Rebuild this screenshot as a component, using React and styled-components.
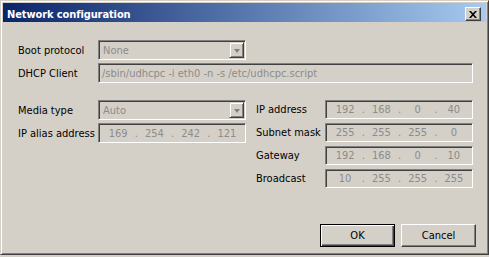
import React from 'react';
import styled, { createGlobalStyle } from 'styled-components';

const Global = createGlobalStyle`
  html, body { margin: 0; padding: 0; background: #d4d0c8; }
  body {
    font-family: "DejaVu Sans Condensed", "DejaVu Sans", sans-serif;
    font-stretch: semi-condensed;
    font-size: 11px;
    color: #000;
  }
`;

const Window = styled.div`
  width: 489px;
  height: 255px;
  box-sizing: border-box;
  background: #d4d0c8;
  border: 1px solid;
  border-color: #d4d0c8 #404040 #404040 #d4d0c8;
  box-shadow: inset 1px 1px #fff, inset -1px -1px #808080;
  padding: 2px;
  display: flex;
  flex-direction: column;
`;

const TitleBar = styled.div`
  height: 19px;
  flex: none;
  display: flex;
  align-items: flex-start;
  justify-content: space-between;
  background: linear-gradient(to right, #0a246a, #a6caf0);
  padding: 0 5px 0 4px;
`;

const TitleText = styled.div`
  color: #fff;
  font-weight: bold;
  font-size: 11px;
  line-height: 13px;
  padding-top: 5px;
  letter-spacing: -0.1px;
`;

const CloseButton = styled.div`
  margin-top: 4px;
  width: 16px;
  height: 14px;
  box-sizing: border-box;
  background: #d4d0c8;
  border: 1px solid;
  border-color: #fff #404040 #404040 #fff;
  box-shadow: inset -1px -1px #808080;
  display: flex;
  align-items: center;
  justify-content: center;
`;

const Content = styled.div`
  flex: 1;
  display: flex;
  flex-direction: column;
  padding: 18px 10px 5px 15px;
`;

const Row = styled.div`
  display: flex;
  align-items: center;
  height: ${p => p.$h || 20}px;
  margin-bottom: ${p => p.$gap ?? 3}px;
`;

const Label = styled.div`
  width: ${p => p.$w}px;
  flex: none;
  line-height: 13px;
`;

const Sunken = styled.div`
  box-sizing: border-box;
  width: ${p => p.$w}px;
  height: ${p => p.$h || 20}px;
  border: 1px solid;
  border-color: #808080 #fff #fff #808080;
  box-shadow: inset 1px 1px #404040, inset -1px -1px #d4d0c8;
  background: #d4d0c8;
  color: #8c8c8c;
  display: flex;
  align-items: center;
  padding: 0 2px 0 3px;
  white-space: nowrap;
  overflow: hidden;
`;

const ComboText = styled.div`
  flex: 1;
  padding-left: 1px;
`;

const ArrowButton = styled.div`
  box-sizing: border-box;
  width: 15px;
  height: 16px;
  margin-right: -1px;
  background: #d4d0c8;
  border: 1px solid;
  border-color: #d4d0c8 #404040 #404040 #d4d0c8;
  box-shadow: inset 1px 1px #fff, inset -1px -1px #808080;
  display: flex;
  align-items: center;
  justify-content: center;
  &::after {
    content: "";
    border-left: 3.5px solid transparent;
    border-right: 3.5px solid transparent;
    border-top: 4px solid #808080;
    margin-top: 1px;
  }
`;

const Columns = styled.div`
  display: flex;
  margin-top: 14px;
`;

const Column = styled.div`
  display: flex;
  flex-direction: column;
  width: ${p => p.$w}px;
`;

const Octet = styled.div`
  flex: 1;
  text-align: center;
`;

const Dot = styled.div`
  width: 4px;
  text-align: center;
`;

const Buttons = styled.div`
  margin-top: auto;
  display: flex;
  justify-content: flex-end;
  gap: 6px;
`;

const Button = styled.div`
  box-sizing: border-box;
  width: 75px;
  height: 23px;
  background: #d4d0c8;
  display: flex;
  align-items: center;
  justify-content: center;
  border: 1px solid;
  border-color: ${p => (p.$default ? '#000' : '#fff #404040 #404040 #fff')};
  box-shadow: ${p =>
    p.$default
      ? 'inset 1px 1px #fff, inset -1px -1px #404040, inset -2px -2px #808080'
      : 'inset -1px -1px #808080'};
`;

const Combo = ({ value, width }) => (
  <Sunken $w={width}>
    <ComboText>{value}</ComboText>
    <ArrowButton />
  </Sunken>
);

const IpField = ({ parts, width, height }) => (
  <Sunken $w={width} $h={height}>
    {parts.map((p, i) => (
      <React.Fragment key={i}>
        {i > 0 && <Dot>.</Dot>}
        <Octet>{p}</Octet>
      </React.Fragment>
    ))}
  </Sunken>
);

export default function App() {
  return (
    <>
      <Global />
      <Window>
        <TitleBar>
          <TitleText>Network configuration</TitleText>
          <CloseButton>
            <svg width="8" height="7" viewBox="0 0 8 7">
              <path d="M0 0h2l2 2.3L6 0h2L5 3.5 8 7H6L4 4.7 2 7H0l3-3.5z" fill="#000" />
            </svg>
          </CloseButton>
        </TitleBar>
        <Content>
          <Row>
            <Label $w={80}>Boot protocol</Label>
            <Combo value="None" width={148} />
          </Row>
          <Row>
            <Label $w={80}>DHCP Client</Label>
            <Sunken $w={375}>/sbin/udhcpc -i eth0 -n -s /etc/udhcpc.script</Sunken>
          </Row>
          <Columns>
            <Column $w={238}>
              <Row>
                <Label $w={80}>Media type</Label>
                <Combo value="Auto" width={148} />
              </Row>
              <Row>
                <Label $w={80}>IP alias address</Label>
                <IpField parts={['169', '254', '242', '121']} width={148} />
              </Row>
            </Column>
            <Column $w={217}>
              {[
                ['IP address', ['192', '168', '0', '40']],
                ['Subnet mask', ['255', '255', '255', '0']],
                ['Gateway', ['192', '168', '0', '10']],
                ['Broadcast', ['10', '255', '255', '255']],
              ].map(([label, parts]) => (
                <Row key={label} $h={19} $gap={4}>
                  <Label $w={69}>{label}</Label>
                  <IpField parts={parts} width={148} height={19} />
                </Row>
              ))}
            </Column>
          </Columns>
          <Buttons>
            <Button $default>OK</Button>
            <Button>Cancel</Button>
          </Buttons>
        </Content>
      </Window>
    </>
  );
}
